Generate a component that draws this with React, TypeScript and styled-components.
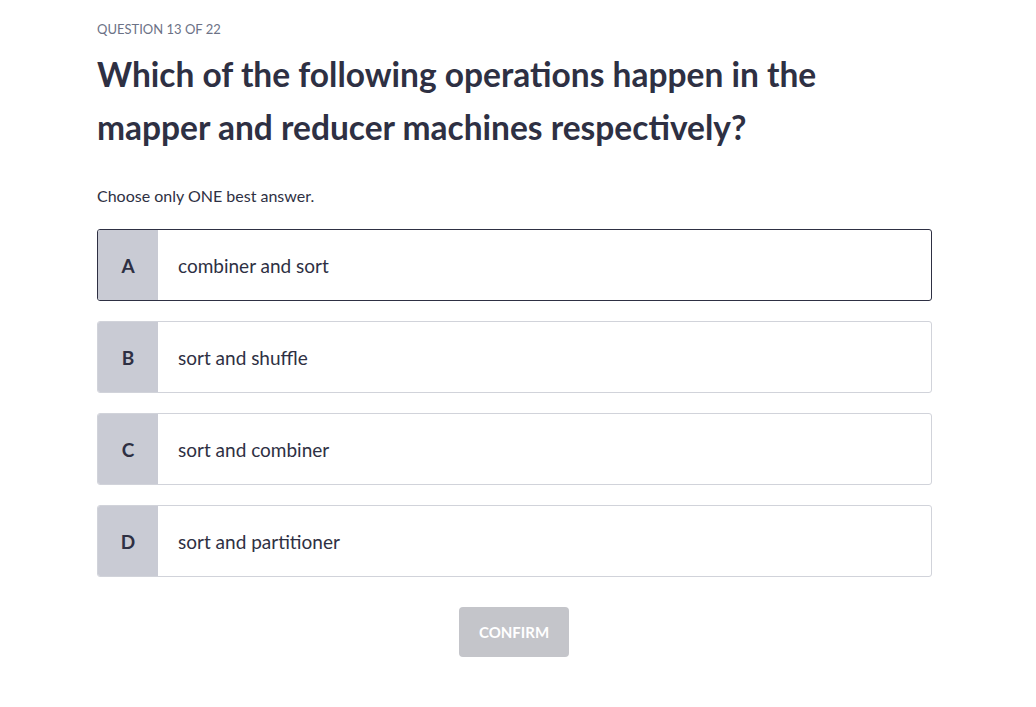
import React from "react";
import styled, { createGlobalStyle } from "styled-components";

const Global = createGlobalStyle`
  html, body { margin: 0; padding: 0; background: #ffffff; }
  body { font-family: Lato, "Open Sans", sans-serif; color: #2e3043; }
  * { box-sizing: border-box; }
`;

const Page = styled.div`
  width: 835px;
  margin-left: 97px;
  padding-top: 20px;
  display: flex;
  flex-direction: column;
`;

const Counter = styled.div`
  font-size: 13px;
  line-height: 18px;
  color: #6c7286;
  text-transform: uppercase;
`;

const Title = styled.h1`
  margin: 10px 0 0 0;
  font-size: 33.5px;
  line-height: 53px;
  font-weight: 700;
  color: #2e3043;
  max-width: 740px;
`;

const Hint = styled.p`
  margin: 31px 0 0 0;
  font-size: 16px;
  line-height: 22px;
  color: #2e3043;
`;

const Options = styled.div`
  margin-top: 22px;
  display: flex;
  flex-direction: column;
  gap: 20px;
`;

const Option = styled.div<{ $selected?: boolean }>`
  display: flex;
  height: 72px;
  border: 1px solid ${(p) => (p.$selected ? "#2e3043" : "#d1d3da")};
  border-radius: 3px;
  overflow: hidden;
  background: #ffffff;
`;

const Letter = styled.div`
  width: 60px;
  flex: none;
  background: #c9cbd4;
  display: flex;
  align-items: center;
  justify-content: center;
  font-size: 19px;
  font-weight: 700;
  color: #2e3043;
`;

const OptionText = styled.div`
  display: flex;
  align-items: center;
  padding-left: 20px;
  font-size: 19px;
  color: #2e3043;
`;

const Footer = styled.div`
  display: flex;
  justify-content: center;
  margin-top: 30px;
  padding-right: 1px;
`;

const Confirm = styled.button`
  width: 110px;
  height: 50px;
  border: none;
  border-radius: 4px;
  background: #c4c5ca;
  color: #ffffff;
  font-family: Lato, "Open Sans", sans-serif;
  font-size: 15px;
  font-weight: 700;
  text-transform: uppercase;
`;

const options = [
  { letter: "A", text: "combiner and sort", selected: true },
  { letter: "B", text: "sort and shuffle" },
  { letter: "C", text: "sort and combiner" },
  { letter: "D", text: "sort and partitioner" },
];

export default function App() {
  return (
    <>
      <Global />
      <Page>
        <Counter>Question 13 of 22</Counter>
        <Title>Which of the following operations happen in the mapper and reducer machines respectively?</Title>
        <Hint>Choose only ONE best answer.</Hint>
        <Options>
          {options.map((o) => (
            <Option key={o.letter} $selected={o.selected}>
              <Letter>{o.letter}</Letter>
              <OptionText>{o.text}</OptionText>
            </Option>
          ))}
        </Options>
        <Footer>
          <Confirm disabled>Confirm</Confirm>
        </Footer>
      </Page>
    </>
  );
}
